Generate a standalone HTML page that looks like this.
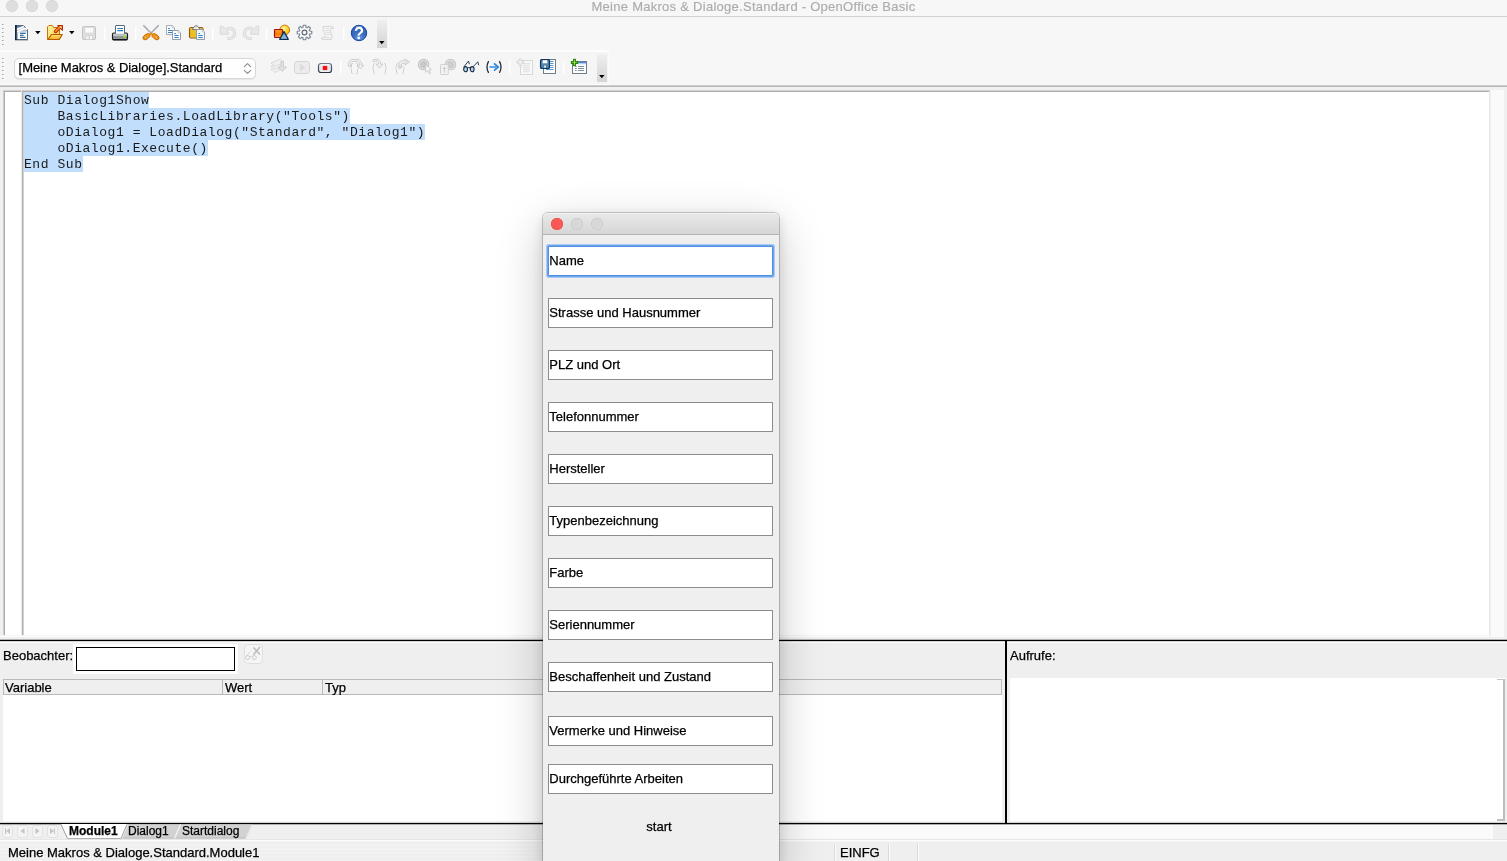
<!DOCTYPE html>
<html lang="de">
<head>
<meta charset="utf-8">
<title>Meine Makros &amp; Dialoge.Standard - OpenOffice Basic</title>
<style>
html,body{margin:0;padding:0;}
body{width:1507px;height:861px;overflow:hidden;position:relative;background:#efefef;
  font-family:"Liberation Sans",sans-serif;font-size:13px;color:#000;line-height:1;-webkit-text-stroke:0.250px #000;}
.abs{position:absolute;}
#top{left:0;top:0;width:1507px;height:85px;background:#f7f7f7;}
#titleline{left:0;top:16px;width:1507px;height:1px;background:#d2d2d2;}
.tl{width:12px;height:12px;border-radius:6px;background:#dedede;top:0;box-shadow:inset 0 0 0 0.5px #d0d0d0;}
#title{-webkit-text-stroke:0.150px #acacac;left:0;top:0px;width:1507px;text-align:center;color:#acacac;font-size:13px;letter-spacing:0.27px;white-space:nowrap;}
#tb1{left:0;top:17px;width:388px;height:33px;background:#f5f5f5;}
#tb2{left:0;top:52px;width:608px;height:32px;background:#f5f5f5;}
#tbgap{left:0;top:50px;width:609px;height:35px;background:#fcfcfc;}
.hdl{width:10px;background:linear-gradient(#efefef,#d4d4d4);}
.sep{width:1px;height:13px;background:#ffffff;box-shadow:1px 0 0 rgba(255,255,255,.45);}
.arr{width:0;height:0;border-left:2.750px solid transparent;border-right:2.750px solid transparent;border-top:3.200px solid #000;}
.ico{position:absolute;overflow:visible;}
#combo{left:14px;top:58px;width:240px;height:19px;border:1px solid #d8d8d8;border-radius:5px;background:#fefefe;box-shadow:0 1px 0 #e6e6e6;}
#combotxt{left:18.600px;top:61px;font-size:13px;letter-spacing:-0.050px;white-space:nowrap;}
/* editor */
#edline{left:0;top:85px;width:1507px;height:2px;background:linear-gradient(#d4d4d4,#b2b2b2);}
#edband{left:0;top:87px;width:1507px;height:553px;background:#f0f0f0;}
#gutter{left:3px;top:90px;width:19px;height:545px;background:#fff;border-left:1px solid #cdcdcd;border-top:1px solid #d2d2d2;box-sizing:border-box;box-shadow:inset 1px 1px 0 #adadad;}
#editor{left:22px;top:90px;width:1468px;height:545px;background:#fff;border-left:1px solid #b2b2b2;border-top:1px solid #d2d2d2;border-right:1px solid #e6e6e6;box-sizing:border-box;box-shadow:inset 0 1px 0 #adadad,inset 1px 0 0 #d0d0d0,-1px 0 0 #e8e8e8;}
#vscroll{left:1491px;top:90px;width:13px;height:547px;background:#fafafa;}
#code{-webkit-text-stroke:0;left:24px;top:92px;font-family:"Liberation Mono",monospace;font-size:13px;letter-spacing:0.556px;line-height:16px;white-space:pre;color:#1a1a1a;}
#code i{font-style:normal;position:relative;top:1px;}
#code span{background:#c1dffd;display:inline-block;height:16px;}
/* bottom */
.hline{left:0;width:1507px;height:1px;background:#000;}
#watchin-pad{left:73px;top:644px;width:165px;height:30px;background:#fff;}
#watchin{left:76px;top:647px;width:159px;height:24px;box-sizing:border-box;border:1px solid #000;background:#fff;}
#wbtn{left:244px;top:644px;width:19px;height:20px;border:1px solid #dfdfdf;border-radius:4px;background:#f5f5f5;box-sizing:border-box;}
#whead{left:3px;top:679px;width:999px;height:16px;box-sizing:border-box;border:1px solid #b9b9b9;background:#efefef;}
#wbody{left:3px;top:695px;width:999px;height:127px;background:#fff;}
.colsep{top:680px;width:1px;height:14px;background:#b9b9b9;}
#vsplit{left:1005px;top:641px;width:2px;height:182px;background:#000;}
#stack{left:1010px;top:678px;width:1493px;height:143px;background:#fff;}
/* tab bar */
.navb{top:825px;width:11px;height:13px;border:1px solid #e2e2e2;border-radius:3px;background:#f4f4f4;box-sizing:border-box;}
/* dialog */
#dlg{left:543px;top:213px;width:236px;height:660px;background:#efefef;border-radius:5px 5px 0 0;
  box-shadow:0 0 0 1px rgba(0,0,0,.20),0 14px 46px rgba(0,0,0,.22),0 4px 14px rgba(0,0,0,.13);}
#dlgbar{left:0;top:0;width:236px;height:21px;border-radius:5px 5px 0 0;background:linear-gradient(#e9e9e9,#d6d6d6);border-bottom:1px solid #b4b4b4;box-shadow:inset 0 1px 0 #f4f4f4;}
.fld{left:5px;width:225px;height:30px;box-sizing:border-box;border:1px solid #8c8c8c;background:#fff;font-size:13px;line-height:28px;padding-left:0;text-indent:0.3px;white-space:nowrap;}
</style>
</head>
<body>
<div id="wrap" class="abs" style="left:0;top:0;width:1507px;height:861px;overflow:hidden;will-change:transform">
<div id="top" class="abs"></div>
<div class="abs tl" style="left:6px"></div><div class="abs tl" style="left:26px"></div><div class="abs tl" style="left:46px"></div>
<div id="title" class="abs">Meine Makros &amp; Dialoge.Standard - OpenOffice Basic</div>
<div id="titleline" class="abs"></div>
<div id="tbgap" class="abs"></div>
<div id="tb1" class="abs"></div>
<div id="tb2" class="abs"></div>
<div id="combo" class="abs"></div>
<div id="combotxt" class="abs">[Meine Makros &amp; Dialoge].Standard</div>
<!--ICONS1START--><!-- toolbar grips -->
<svg class="ico" style="left:1px;top:23px" width="5" height="26" viewBox="0 0 5 26"><g fill="#a2a2a2"><rect x="1" y="1" width="1.500" height="1"/><rect x="1" y="5" width="1.500" height="1"/><rect x="1" y="9" width="1.500" height="1"/><rect x="1" y="13" width="1.500" height="1"/><rect x="1" y="17" width="1.500" height="1"/><rect x="1" y="21" width="1.500" height="1"/></g><g fill="#ffffff"><rect x="2" y="2" width="2" height="1"/><rect x="2" y="6" width="2" height="1"/><rect x="2" y="10" width="2" height="1"/><rect x="2" y="14" width="2" height="1"/><rect x="2" y="18" width="2" height="1"/><rect x="2" y="22" width="2" height="1"/></g></svg>
<svg class="ico" style="left:1px;top:57px" width="5" height="26" viewBox="0 0 5 26"><g fill="#a2a2a2"><rect x="1" y="1" width="1.500" height="1"/><rect x="1" y="5" width="1.500" height="1"/><rect x="1" y="9" width="1.500" height="1"/><rect x="1" y="13" width="1.500" height="1"/><rect x="1" y="17" width="1.500" height="1"/><rect x="1" y="21" width="1.500" height="1"/></g><g fill="#ffffff"><rect x="2" y="2" width="2" height="1"/><rect x="2" y="6" width="2" height="1"/><rect x="2" y="10" width="2" height="1"/><rect x="2" y="14" width="2" height="1"/><rect x="2" y="18" width="2" height="1"/><rect x="2" y="22" width="2" height="1"/></g></svg>
<!-- new document -->
<svg class="ico" style="left:13px;top:24px" width="17" height="17" viewBox="0 0 17 17">
<defs><linearGradient id="gnd" x1="0" y1="0" x2="0" y2="1"><stop offset="0" stop-color="#4f7196"/><stop offset="1" stop-color="#dfe7ef"/></linearGradient></defs>
<path d="M2.500 1.500H10.500L14.500 5.500V15.500H2.500Z" fill="#ffffff" stroke="#5d6b7c" stroke-width="1"/>
<path d="M3 2H10.300L14 5.700V8.800H3Z" fill="url(#gnd)"/>
<path d="M0.300 5.300C4 5.800 7.500 4.300 11 2.600" stroke="#ffffff" stroke-width="1.700" fill="none"/>
<path d="M0.300 8.300C5 8.300 8 6.300 9.500 5.300C11 4.400 12.800 4.400 14.200 4.900" stroke="#ffffff" stroke-width="1.700" fill="none"/>
<path d="M2 15.900H14.900" stroke="#505c6b" stroke-width="0.900"/>
<rect x="2" y="1" width="1.800" height="15" fill="#0e2443"/>
<rect x="3.800" y="8.500" width="1" height="7" fill="#6c8db0" opacity="0.750"/>
<path d="M7 9.300H12.600M7 11.400H10.600M7 13.400H12.600" stroke="#346fab" stroke-width="1.250"/>
</svg>
<svg class="ico" style="left:35px;top:31px" width="6" height="4" viewBox="0 0 6 4"><path d="M0.100 0H5.500L2.800 3.300Z" fill="#000"/></svg>
<!-- open folder -->
<svg class="ico" style="left:46px;top:24px" width="18" height="17" viewBox="0 0 18 17">
<defs><linearGradient id="gfo" x1="0" y1="0" x2="0" y2="1"><stop offset="0" stop-color="#fde27a"/><stop offset="1" stop-color="#f3b010"/></linearGradient>
<linearGradient id="gfb" x1="0" y1="0" x2="1" y2="1"><stop offset="0" stop-color="#fdf0a0"/><stop offset="1" stop-color="#f9d553"/></linearGradient></defs>
<path d="M1.500 15.300V2.800L2.800 1.500H6.300L7.500 3.500H13.500V15.300Z" fill="url(#gfb)" stroke="#c77708" stroke-width="1" stroke-linejoin="round"/>
<path d="M1.800 15.500L5.600 10.500H16.300L13.200 15.500Z" fill="url(#gfo)" stroke="#b25a02" stroke-width="1.200" stroke-linejoin="round"/>
<path d="M9.600 7.400L13.200 3.800" stroke="#b32a00" stroke-width="3.600" stroke-linecap="round"/>
<path d="M11.800 1.600H16.400V6.200Z" fill="#ff9a3c" stroke="#b32a00" stroke-width="1.200" stroke-linejoin="round"/>
<path d="M9.600 7.400L13.600 3.400" stroke="#ff8a1f" stroke-width="1.700" stroke-linecap="round"/>
<path d="M13.300 2.400H15.600V4.700Z" fill="#ffe2c0"/>
</svg>
<svg class="ico" style="left:69px;top:31px" width="6" height="4" viewBox="0 0 6 4"><path d="M0.100 0H5.500L2.800 3.300Z" fill="#000"/></svg>
<!-- save disabled -->
<svg class="ico" style="left:81px;top:25px" width="16" height="16" viewBox="0 0 16 16">
<rect x="1.500" y="1.500" width="13" height="13" rx="1.500" fill="#dedede" stroke="#c3c3c3" stroke-width="1"/>
<rect x="4" y="2.300" width="8.500" height="5.700" fill="#fbfbfb" stroke="#d2d2d2" stroke-width="0.600"/>
<rect x="5" y="10.500" width="6.500" height="4" fill="#cfcfcf"/>
<rect x="5.300" y="11" width="2.500" height="3.300" fill="#f1f1f1"/><rect x="9" y="11" width="2" height="3.300" fill="#fbfbfb"/>
</svg>
<div class="abs sep" style="left:104px;top:27px"></div>
<!-- printer -->
<svg class="ico" style="left:111px;top:24px" width="18" height="17" viewBox="0 0 18 17">
<defs><linearGradient id="gpr" x1="0" y1="0" x2="0" y2="1"><stop offset="0" stop-color="#e9ebec"/><stop offset="0.450" stop-color="#b9bdbf"/><stop offset="0.550" stop-color="#84898c"/><stop offset="1" stop-color="#a7abad"/></linearGradient></defs>
<rect x="1.500" y="9" width="15" height="6.800" rx="1.300" fill="url(#gpr)" stroke="#1e1e1e" stroke-width="1.200"/>
<path d="M2 15.600H16" stroke="#111" stroke-width="1.200"/>
<path d="M4.500 10V2Q4.500 1.500 5 1.500H13Q13.500 1.500 13.500 2V10" fill="#ffffff" stroke="#54697f" stroke-width="1"/>
<path d="M4.500 10.300H13.500" stroke="#aeb4b9" stroke-width="1"/>
<path d="M6.300 4.500H12M6.300 6.600H12" stroke="#2f7fc0" stroke-width="1.100"/>
<circle cx="13.600" cy="12.600" r="1" fill="#8df013"/><circle cx="13.600" cy="12.600" r="1.600" fill="#8df013" opacity="0.350"/>
</svg>
<div class="abs sep" style="left:135px;top:27px"></div>
<!-- scissors -->
<svg class="ico" style="left:142px;top:24px" width="18" height="17" viewBox="0 0 18 17">
<path d="M1.300 1.200L9.900 10M16.700 1.200L8.100 10" stroke="#8f9298" stroke-width="1.350"/>
<path d="M1.300 1.200L9.900 10M16.700 1.200L8.100 10" stroke="#f4f5f6" stroke-width="0.500" stroke-dasharray="0.900 0.800"/>
<g transform="rotate(-36 4.500 12.700)"><ellipse cx="4.500" cy="12.700" rx="4" ry="2.350" fill="#f79a12" stroke="#c46d00" stroke-width="0.900"/><ellipse cx="3.700" cy="12.700" rx="1.150" ry="0.800" fill="#fff6e6" stroke="#b96500" stroke-width="0.450"/></g>
<g transform="rotate(36 13.500 12.700)"><ellipse cx="13.500" cy="12.700" rx="4" ry="2.350" fill="#f79a12" stroke="#c46d00" stroke-width="0.900"/><ellipse cx="14.300" cy="12.700" rx="1.150" ry="0.800" fill="#fff6e6" stroke="#b96500" stroke-width="0.450"/></g>
<path d="M7.600 9.700L9 8.400L10.400 9.700L9 11.200Z" fill="#ea8606"/>
</svg>
<!-- copy -->
<svg class="ico" style="left:165px;top:24px" width="18" height="17" viewBox="0 0 18 17">
<path d="M1.500 1.500H7.200L9.500 3.800V10.500H1.500Z" fill="#fdfdfe" stroke="#98a3af" stroke-width="0.900"/>
<path d="M7.200 1.500V3.800H9.500" fill="#ffffff" stroke="#aab3bd" stroke-width="0.700"/>
<path d="M3 4.500H4.800M3 6.500H7.500M3 8.500H7" stroke="#3581c2" stroke-width="1"/>
<path d="M7.500 6.500H13.200L15.500 8.800V15.500H7.500Z" fill="#fdfdfe" stroke="#8793a0" stroke-width="0.900"/>
<path d="M13.200 6.500V8.800H15.500" fill="#ffffff" stroke="#aab3bd" stroke-width="0.700"/>
<path d="M9.300 9.500H11M9.300 11.500H13.700M9.300 13.500H13.700" stroke="#3581c2" stroke-width="1"/>
</svg>
<!-- paste -->
<svg class="ico" style="left:188px;top:24px" width="18" height="17" viewBox="0 0 18 17">
<defs><linearGradient id="gcb" x1="0" y1="0" x2="0" y2="1"><stop offset="0" stop-color="#e8c63a"/><stop offset="0.800" stop-color="#e9bd1c"/><stop offset="1" stop-color="#f6dd7a"/></linearGradient></defs>
<rect x="1.500" y="3.500" width="13.500" height="10.500" rx="1.500" fill="url(#gcb)" stroke="#9a5b05" stroke-width="1.200"/>
<path d="M4.300 5.500L6.600 2.300Q8.200 0.600 9.800 2.300L12.100 5.500Z" fill="#fdfdfd" stroke="#5b5e62" stroke-width="0.800" stroke-linejoin="round"/>
<path d="M7.100 3H9.300" stroke="#8f959b" stroke-width="0.800"/>
<path d="M8.500 5.500H14.200L16.500 7.800V15.500H8.500Z" fill="#f4f7fa" stroke="#8793a0" stroke-width="0.900"/>
<path d="M14.200 5.500V7.800H16.500" fill="#ffffff" stroke="#aab3bd" stroke-width="0.700"/>
<path d="M10.500 9.500H12M10.300 11.500H14.700M10.300 13.500H14.700" stroke="#3581c2" stroke-width="1"/>
</svg>
<div class="abs sep" style="left:212px;top:27px"></div>
<!-- undo disabled -->
<svg class="ico" style="left:219px;top:25px" width="18" height="16" viewBox="0 0 18 16">
<path d="M6.800 4.800A5.100 5.100 0 1 1 9.500 13.400" fill="none" stroke="#d8d8d8" stroke-width="3.200" stroke-linecap="round"/>
<path d="M1.300 1.300H3.600L9.300 6.700V9.200H1.300Z" fill="#e8e8e8" stroke="#d8d8d8" stroke-width="1" stroke-linejoin="round"/>
<path d="M6.800 4.800A5.100 5.100 0 1 1 9.500 13.400" fill="none" stroke="#e9e9e9" stroke-width="1.700" stroke-linecap="round"/>
</svg>
<!-- redo disabled -->
<svg class="ico" style="left:242px;top:25px" width="18" height="16" viewBox="0 0 18 16"><g transform="translate(18 0) scale(-1 1)">
<path d="M6.800 4.800A5.100 5.100 0 1 1 9.500 13.400" fill="none" stroke="#d8d8d8" stroke-width="3.200" stroke-linecap="round"/>
<path d="M1.300 1.300H3.600L9.300 6.700V9.200H1.300Z" fill="#e8e8e8" stroke="#d8d8d8" stroke-width="1" stroke-linejoin="round"/>
<path d="M6.800 4.800A5.100 5.100 0 1 1 9.500 13.400" fill="none" stroke="#e9e9e9" stroke-width="1.700" stroke-linecap="round"/></g>
</svg>
<div class="abs sep" style="left:266px;top:27px"></div>
<!-- shapes -->
<svg class="ico" style="left:273px;top:24px" width="18" height="17" viewBox="0 0 18 17">
<defs><radialGradient id="gci" cx="0.400" cy="0.350" r="0.700"><stop offset="0" stop-color="#fff3a8"/><stop offset="0.600" stop-color="#fbd328"/><stop offset="1" stop-color="#f5b800"/></radialGradient>
<linearGradient id="gsq" x1="0" y1="0" x2="0" y2="1"><stop offset="0" stop-color="#ff9d2a"/><stop offset="0.600" stop-color="#f77d00"/><stop offset="1" stop-color="#ffae45"/></linearGradient>
<linearGradient id="gtr" x1="0" y1="0" x2="0" y2="1"><stop offset="0" stop-color="#4f86b4"/><stop offset="1" stop-color="#a8cbe4"/></linearGradient></defs>
<circle cx="11.700" cy="6" r="4.900" fill="url(#gci)" stroke="#c9780a" stroke-width="1"/>
<rect x="1.500" y="5.500" width="8" height="8" rx="0.800" fill="url(#gsq)" stroke="#a60d0d" stroke-width="1.200"/>
<path d="M11 7.500L15.300 15.300H6.700Z" fill="url(#gtr)" stroke="#0c2d5a" stroke-width="1.300" stroke-linejoin="round"/>
</svg>
<!-- gear -->
<svg class="ico" style="left:296px;top:24px" width="17" height="17" viewBox="0 0 17 17">
<g transform="translate(8.500 8.500)">
<path id="gearp" d="M-1.55 -5.07L-1.28 -7.29L1.28 -7.29L1.55 -5.07L2.49 -4.68L4.24 -6.06L6.06 -4.24L4.68 -2.49L5.07 -1.55L7.29 -1.28L7.29 1.28L5.07 1.55L4.68 2.49L6.06 4.24L4.24 6.06L2.49 4.68L1.55 5.07L1.28 7.29L-1.28 7.29L-1.55 5.07L-2.49 4.68L-4.24 6.06L-6.06 4.24L-4.68 2.49L-5.07 1.55L-7.29 1.28L-7.29 -1.28L-5.07 -1.55L-4.68 -2.49L-6.06 -4.24L-4.24 -6.06L-2.49 -4.68Z" fill="#fbfcfd" stroke="#76828f" stroke-width="1.100" stroke-linejoin="round"/>
<circle cx="0" cy="0" r="2.400" fill="#f6f6f6" stroke="#5f6b78" stroke-width="1.200"/>
</g>
</svg>
<!-- scroll disabled -->
<svg class="ico" style="left:320px;top:25px" width="17" height="16" viewBox="0 0 17 16">
<path d="M3 1.500H11.500Q13.500 1.500 13.500 3.500H11Q9.500 5.500 11 8Q13 11 11.500 14.500H3Q1 14.500 1.500 12.500H4.500Q6 10.500 4.500 8Q2.500 5 3 1.500Z" fill="#f3f3f3" stroke="#d6d6d6" stroke-width="1" stroke-linejoin="round"/>
<path d="M5 3.500H9M5 5.500H9M6 7.500H10M7 9.500H11M2 12.500H10" stroke="#dcdcdc" stroke-width="0.800"/>
</svg>
<div class="abs sep" style="left:343px;top:27px"></div>
<!-- help -->
<svg class="ico" style="left:350px;top:24px" width="18" height="18" viewBox="0 0 18 18">
<defs><radialGradient id="ghp" cx="0.500" cy="0.850" r="0.800"><stop offset="0" stop-color="#6b9be6"/><stop offset="0.450" stop-color="#3e6fc4"/><stop offset="1" stop-color="#2f5fb6"/></radialGradient></defs>
<circle cx="9" cy="9" r="7.700" fill="url(#ghp)" stroke="#1746a0" stroke-width="1"/>
<ellipse cx="9" cy="3.200" rx="3.200" ry="0.900" fill="#dfe9fa" opacity="0.750"/>
<text x="9" y="14.600" text-anchor="middle" font-family="Liberation Sans, sans-serif" font-weight="bold" font-size="16.500" fill="#ffffff">?</text>
</svg>
<div class="abs hdl" style="left:377px;top:20px;height:28px"></div>
<svg class="ico" style="left:379px;top:41px" width="6" height="4" viewBox="0 0 6 4"><path d="M0.100 0H5.500L2.800 3.300Z" fill="#000"/></svg>
<div class="abs" style="left:388px;top:17px;width:1px;height:33px;background:#fbfbfb"></div>
<!--ICONS1END-->
<!--ICONS2START--><!-- combo chevrons -->
<svg class="ico" style="left:243px;top:62px" width="9" height="13" viewBox="0 0 9 13"><path d="M1.300 4.700L4.500 1.600L7.700 4.700M1.300 8.300L4.500 11.400L7.700 8.300" fill="none" stroke="#8c8c8c" stroke-width="1.150" stroke-linecap="round" stroke-linejoin="round"/></svg>
<!-- compile disabled -->
<svg class="ico" style="left:270px;top:58px" width="18" height="17" viewBox="0 0 18 17">
<g fill="#f0f0f0" stroke="#cdcdcd" stroke-width="0.900" stroke-dasharray="1.400 0.600"><path d="M1 11L5 14.500L13 10.500L9 7.500Z"/><path d="M1 8L5 11.500L13 7.500L9 4.500Z"/><path d="M1 5L5 8.500L14 4.500L10.500 1Z"/></g>
<path d="M11 3.500H13.500V9H16.500L12.250 13.500L8 9H11Z" fill="#e2e2e2" stroke="#c9c9c9" stroke-width="0.900"/>
</svg>
<!-- run disabled -->
<svg class="ico" style="left:293px;top:60px" width="18" height="15" viewBox="0 0 18 15">
<rect x="1.500" y="1.500" width="15" height="12" rx="3" fill="#ececec" stroke="#d3d3d3" stroke-width="1"/>
<path d="M7.300 4.200V10.800L11.800 7.500Z" fill="#dcdcdc" stroke="#d2d2d2" stroke-width="0.500"/>
</svg>
<!-- stop -->
<svg class="ico" style="left:317px;top:62px" width="16" height="12" viewBox="0 0 16 12">
<defs><linearGradient id="gst" x1="0" y1="0" x2="0" y2="1"><stop offset="0" stop-color="#f4f6f8"/><stop offset="0.500" stop-color="#dfe4e9"/><stop offset="1" stop-color="#f2f5f7"/></linearGradient><linearGradient id="gss" x1="0" y1="0" x2="0" y2="1"><stop offset="0" stop-color="#6f7988"/><stop offset="1" stop-color="#283140"/></linearGradient></defs>
<rect x="1.500" y="1.500" width="13" height="9" rx="2.500" fill="url(#gst)" stroke="url(#gss)" stroke-width="1.200"/>
<rect x="5.800" y="3.900" width="4.400" height="4.200" fill="#fb0d0d"/>
</svg>
<div class="abs sep" style="left:340px;top:61px"></div>
<!-- step over disabled -->
<svg class="ico" style="left:347px;top:58px" width="18" height="17" viewBox="0 0 18 17">
<g fill="none" stroke="#c9c9c9" stroke-width="0.900" stroke-linejoin="round">
<path d="M5.800 5.400Q4.500 5.400 4.500 6.600V9.200L3.300 10.300L4.500 11.400V14.300Q4.500 15.600 5.800 15.600M9.200 5.400Q10.500 5.400 10.500 6.600V9.200L11.700 10.300L10.500 11.400V14.300Q10.500 15.600 9.200 15.600"/>
<path d="M1.400 8.300V4.700L4.200 1.400H11.800L14.600 4.700V7.300H16.800L13.500 10.700L10.200 7.300H12.400V5.200L10.900 3.400H5.100L3.600 5.200V8.300Z" fill="#f1f1f1"/></g>
</svg>
<!-- step into disabled -->
<svg class="ico" style="left:371px;top:58px" width="17" height="17" viewBox="0 0 17 17">
<g fill="none" stroke="#c9c9c9" stroke-width="0.900" stroke-linejoin="round">
<path d="M3.800 5.400Q2.500 5.400 2.500 6.600V9.200L1.300 10.300L2.500 11.400V14.300Q2.500 15.600 3.800 15.600M13.200 5.400Q14.500 5.400 14.500 6.600V9.200L15.700 10.300L14.500 11.400V14.300Q14.500 15.600 13.200 15.600"/>
<path d="M1.200 2.700L2.800 1.300H7.200L9.600 3.700V6.200H12L8.500 10.200L5 6.200H7.400V4.500L6.300 3.400H2.800Z" fill="#f1f1f1"/></g>
</svg>
<!-- step out disabled -->
<svg class="ico" style="left:394px;top:58px" width="17" height="17" viewBox="0 0 17 17">
<g fill="none" stroke="#c9c9c9" stroke-width="0.900" stroke-linejoin="round">
<path d="M3.800 5.400Q2.500 5.400 2.500 6.600V9.200L1.300 10.300L2.500 11.400V14.300Q2.500 15.600 3.800 15.600M8.200 8.400Q9.500 8.400 9.500 9.300L10.700 10.300L9.500 11.400V14.300Q9.500 15.600 8.200 15.600"/>
<path d="M4.600 10.200V6.500Q4.800 3 8.500 2.600H11V0.900L15.600 4L11 7.100V5.300H9Q7.300 5.600 7.300 7.300V10.200Z" fill="#efefef"/>
<path d="M6 9.700V6.800"/></g>
<path d="M11.500 2.200L14.300 4L11.500 5.900Z" fill="#dcdcdc"/>
</svg>
<!-- breakpoint disabled -->
<svg class="ico" style="left:417px;top:58px" width="17" height="18" viewBox="0 0 17 18">
<circle cx="6.600" cy="6.600" r="5.200" fill="#e2e2e2" stroke="#c3c3c3" stroke-width="1.100"/>
<circle cx="6.600" cy="6.600" r="3.100" fill="#c9c9c9" stroke="#bdbdbd" stroke-width="0.800"/>
<path d="M8.800 6.600L14.300 11.600L11.800 11.900L13.600 15.100L12.300 15.800L10.600 12.600L8.800 14.300Z" fill="#fdfdfd" stroke="#c6c6c6" stroke-width="0.900" stroke-linejoin="round"/>
</svg>
<!-- manage breakpoints disabled -->
<svg class="ico" style="left:439px;top:58px" width="18" height="18" viewBox="0 0 18 18">
<circle cx="11.500" cy="6.600" r="5.200" fill="#e4e4e4" stroke="#c8c8c8" stroke-width="1.100"/>
<circle cx="11.500" cy="6.600" r="3.100" fill="#cfcfcf" stroke="#c2c2c2" stroke-width="0.800"/>
<rect x="1.500" y="6.500" width="7.700" height="10" rx="0.800" fill="#f3f3f3" stroke="#d0d0d0" stroke-width="1"/>
<path d="M5.300 8.500V14.500M3.500 10.300H7.200" stroke="#cacaca" stroke-width="1"/>
</svg>
<!-- glasses -->
<svg class="ico" style="left:462px;top:59px" width="18" height="15" viewBox="0 0 18 15">
<path d="M2.200 7.400L6.500 2L7.300 4.800M11.500 7.300L15.800 2.800L16.600 5.800" fill="none" stroke="#1d2c40" stroke-width="0.900" stroke-linecap="round" stroke-linejoin="round"/>
<ellipse cx="3.600" cy="10.200" rx="1.900" ry="2.600" fill="#b4d6f7" stroke="#17263a" stroke-width="1.050"/>
<ellipse cx="10.200" cy="10.200" rx="1.900" ry="2.600" fill="#b4d6f7" stroke="#17263a" stroke-width="1.050"/>
<path d="M5.500 9Q6.900 8 8.300 9" fill="none" stroke="#17263a" stroke-width="1"/>
</svg>
<!-- step (->) -->
<svg class="ico" style="left:485px;top:60px" width="18" height="14" viewBox="0 0 18 14">
<path d="M3.400 1.600Q0.600 7 3.400 12.400M14.600 1.600Q17.400 7 14.600 12.400" fill="none" stroke="#1d2c40" stroke-width="1.300" stroke-linecap="round"/>
<path d="M4.500 7H11.500" stroke="#3a92de" stroke-width="1.600"/>
<path d="M9 3.400L13.200 7L9 10.600" fill="none" stroke="#2c86d6" stroke-width="1.700" stroke-linejoin="miter"/>
</svg>
<div class="abs sep" style="left:509px;top:61px"></div>
<!-- insert source disabled -->
<svg class="ico" style="left:516px;top:58px" width="18" height="18" viewBox="0 0 18 18">
<rect x="4.500" y="2.500" width="12" height="14" fill="#f8f8f8" stroke="#d9d9d9" stroke-width="1"/>
<path d="M7 5.700H14M7 7.700H14M7 9.700H14M7 11.700H14M7 13.700H14" stroke="#dcdcdc" stroke-width="0.900"/>
<path d="M3.200 1H5.300V3.200H7.500V5.300H5.300V7.700H3.200V5.300H1V3.200H3.200Z" fill="#f4f4f4" stroke="#d2d2d2" stroke-width="0.900"/>
</svg>
<!-- save source -->
<svg class="ico" style="left:539px;top:58px" width="18" height="17" viewBox="0 0 18 17">
<rect x="4.500" y="1.500" width="12" height="14" fill="#fdfdfe" stroke="#6f7d8c" stroke-width="1"/>
<path d="M11 3.500H14.500M11 5.500H14.500M11 7.500H14.500M11 9.500H14.500M7 11.500H14.500" stroke="#4a8cc9" stroke-width="0.900"/>
<rect x="1.600" y="1.600" width="8.800" height="8.800" rx="1" fill="#5f8fb7" stroke="#0f3359" stroke-width="1.300"/>
<rect x="3.700" y="2.200" width="4.600" height="3" fill="#ffffff"/>
<rect x="3.300" y="6.500" width="5.400" height="3.400" fill="#4c7ea8"/>
<rect x="5.200" y="7.600" width="1.700" height="2" fill="#ffffff"/>
</svg>
<div class="abs sep" style="left:563px;top:61px"></div>
<!-- new dialog -->
<svg class="ico" style="left:570px;top:58px" width="18" height="17" viewBox="0 0 18 17">
<rect x="2.500" y="3.500" width="14" height="12" fill="#fbfcfe" stroke="#6f7d8c" stroke-width="1"/>
<rect x="3" y="4" width="13" height="1.400" fill="#4b8ae2"/>
<rect x="3" y="5.400" width="13" height="0.800" fill="#b4d0f5"/>
<path d="M5 8.500H6.700M5 10.500H6.700M5 12.500H6.700M8 8.500H14M8 10.500H14M8 12.500H14" stroke="#76838f" stroke-width="0.900"/>
<path d="M3.600 1.400H5.400V3.600H7.600V5.400H5.400V7.600H3.600V5.400H1.400V3.600H3.600Z" fill="#c3e556" stroke="#1f8a09" stroke-width="1.100" stroke-linejoin="round"/>
</svg>
<div class="abs hdl" style="left:597px;top:54px;height:28px"></div>
<svg class="ico" style="left:599px;top:75px" width="6" height="4" viewBox="0 0 6 4"><path d="M0.100 0H5.500L2.800 3.300Z" fill="#000"/></svg>
<div class="abs" style="left:608px;top:52px;width:1px;height:32px;background:#fbfbfb"></div>
<!--ICONS2END-->

<div id="edband" class="abs"></div>
<div id="edline" class="abs"></div>
<div id="gutter" class="abs"></div>
<div id="editor" class="abs"></div>
<div id="vscroll" class="abs"></div>
<div id="code" class="abs"><span><i>Sub Dialog1Show</i></span>
<span><i>    BasicLibraries.LoadLibrary("Tools")</i></span>
<span><i>    oDialog1 = LoadDialog("Standard", "Dialog1")</i></span>
<span><i>    oDialog1.Execute()</i></span>
<span><i>End Sub</i></span></div>


<div class="abs" style="left:0;top:635px;width:1490px;height:1px;background:#f4f4f4"></div>
<div class="abs" style="left:0;top:636px;width:1490px;height:1px;background:#fdfdfd"></div>
<div class="abs" style="left:0;top:639px;width:1507px;height:1px;background:#b4b4b4"></div>
<div class="abs hline" style="top:640px"></div>
<div class="abs" style="left:0;top:641px;width:1507px;height:1px;background:#d6d6d6"></div>
<div class="abs" style="left:0;top:642px;width:1507px;height:1px;background:#fbfbfb"></div>
<div class="abs" style="left:3px;top:649px;font-size:13px;white-space:nowrap" id="lblBeob">Beobachter:</div>
<div id="watchin-pad" class="abs"></div><div id="watchin" class="abs"></div>
<div id="wbtn" class="abs"></div>
<svg class="ico" style="left:244px;top:644px" width="19" height="20" viewBox="0 0 19 20"><g fill="none" stroke="#c6c6c6" stroke-width="0.900"><circle cx="3.700" cy="13.500" r="2"/><circle cx="10.300" cy="13.500" r="2"/><path d="M5.700 13Q7 12 8.300 13M2.500 11.800L7 6.500M9 11.500L11 9" stroke-dasharray="1.300 0.700"/></g><path d="M9.500 3.500L16 10.500M16 3L9.500 10.500" stroke="#bdbdbd" stroke-width="1.700"/></svg>
<div id="whead" class="abs"></div>
<div class="abs colsep" style="left:222px"></div><div class="abs colsep" style="left:322px"></div>
<div class="abs" style="left:5px;top:681px;white-space:nowrap" id="hVar">Variable</div>
<div class="abs" style="left:225px;top:681px;white-space:nowrap" id="hWert">Wert</div>
<div class="abs" style="left:325px;top:681px;white-space:nowrap" id="hTyp">Typ</div>
<div id="wbody" class="abs"></div>
<div class="abs" style="left:1010px;top:649px;white-space:nowrap" id="lblAuf">Aufrufe:</div>
<div id="stack" class="abs" style="width:495px"></div>
<div class="abs" style="left:1503px;top:679px;width:2px;height:142px;background:#bdbdbd"></div>
<div class="abs" style="left:1497px;top:679px;width:8px;height:1px;background:#c4c4c4"></div>
<div class="abs" style="left:1497px;top:819px;width:8px;height:2px;background:#bdbdbd"></div>
<!-- tab bar -->
<div class="abs" style="left:0;top:821px;width:1507px;height:1px;background:#f2f2f2"></div><div class="abs" style="left:0;top:822px;width:1507px;height:1px;background:#d4d4d4"></div>
<div class="abs hline" style="top:823px"></div>
<div class="abs" style="left:0;top:824px;width:1507px;height:1px;background:#adadad"></div>
<div class="abs" style="left:0;top:825px;width:1507px;height:15px;background:#efefef"></div>
<div class="abs" style="left:543px;top:825px;width:950px;height:14px;background:#fafafa"></div>
<div class="abs navb" style="left:2px"></div><div class="abs navb" style="left:17px"></div><div class="abs navb" style="left:32px"></div><div class="abs navb" style="left:47px"></div>
<svg class="abs" style="left:0;top:824px" width="260" height="16" viewBox="0 0 260 16">
 <g fill="#c4c4c4"><path d="M5 4h1v6h-1zM10 4v6l-4-3z"/><path d="M24.5 4v6l-4-3z"/><path d="M35.500 4v6l4-3z"/><path d="M50 4v6l4-3zM54 4h1v6h-1z"/></g>
 <path d="M127 0.500L121 14.500H174L180 0.500Z" fill="#d2d2d2"/>
 <path d="M180 0.500L174 14.500H245.500L251.500 0.500Z" fill="#d2d2d2"/>
 <path d="M122 14H245.500" stroke="#bcbcbc" stroke-width="1" fill="none"/>
 <path d="M127.700 0.500L121.700 14.500M180.500 0.500L174.500 14.500" stroke="#f2f2f2" stroke-width="1.300" fill="none"/><path d="M252 0.500L246 14.500" stroke="#e4e4e4" stroke-width="1" fill="none"/>
 <path d="M61 0L67.500 14.500H121L127 0Z" fill="#ffffff"/>
 <path d="M61 0.500L67.500 14.500M121 14.500L127 0.500" stroke="#9c9c9c" stroke-width="1" fill="none"/>
 <path d="M67.500 14.500H121" stroke="#b0b0b0" stroke-width="1.200" fill="none"/>
</svg>
<div class="abs" style="left:69px;top:825px;font-weight:bold;font-size:12px;white-space:nowrap" id="tab1">Module1</div>
<div class="abs" style="left:128px;top:825px;font-size:12px;white-space:nowrap" id="tab2">Dialog1</div>
<div class="abs" style="left:182px;top:825px;font-size:12px;white-space:nowrap" id="tab3">Startdialog</div>
<div id="vsplit" class="abs"></div>
<!-- status bar -->
<div class="abs" style="left:0;top:839px;width:1507px;height:1px;background:#e6e6e6"></div>
<div class="abs" style="left:0;top:840px;width:1507px;height:1px;background:#fcfcfc"></div><div class="abs" style="left:0;top:841px;width:1507px;height:1px;background:#f4f4f4"></div>
<div class="abs" style="left:0;top:842px;width:1507px;height:19px;background:#efefef"></div><div class="abs" style="left:0;top:842px;width:543px;height:19px;background:repeating-linear-gradient(#efefef 0,#efefef 2px,#f2f2f2 2px,#f2f2f2 4px)"></div>
<div class="abs" style="left:8px;top:846px;white-space:nowrap" id="stat1">Meine Makros &amp; Dialoge.Standard.Module1</div>
<div class="abs" style="left:840px;top:846px;white-space:nowrap" id="stat2">EINFG</div>
<div class="abs" style="left:834px;top:844px;width:1px;height:17px;background:#dadada;box-shadow:1px 0 0 #fbfbfb"></div>
<div class="abs" style="left:888px;top:844px;width:1px;height:17px;background:#dadada;box-shadow:1px 0 0 #fbfbfb"></div>
<div class="abs" style="left:917px;top:844px;width:1px;height:17px;background:#dadada;box-shadow:1px 0 0 #fbfbfb"></div>
<!--BOTTOM-->
<div id="dlg" class="abs"><div id="dlgbar" class="abs"></div>
<div class="abs" style="left:8px;top:5px;width:12px;height:12px;border-radius:6px;background:#fc5753;box-shadow:inset 0 0 0 0.5px #df4744"></div><div class="abs" style="left:28px;top:5px;width:12px;height:12px;border-radius:6px;background:#d8d8d8;box-shadow:inset 0 0 0 0.5px #c4c4c4"></div><div class="abs" style="left:48px;top:5px;width:12px;height:12px;border-radius:6px;background:#d8d8d8;box-shadow:inset 0 0 0 0.5px #c4c4c4"></div>
<div class="abs fld" id="f0" style="top:33px;border:1px solid #4f8fe6;border-radius:1px;box-shadow:0 0 0 1px #6ea6ee,0 0 0 2px rgba(140,186,246,.70)">Name</div>
<div class="abs fld" id="f1" style="top:85px">Strasse und Hausnummer</div>
<div class="abs fld" id="f2" style="top:137px">PLZ und Ort</div>
<div class="abs fld" id="f3" style="top:189px">Telefonnummer</div>
<div class="abs fld" id="f4" style="top:241px">Hersteller</div>
<div class="abs fld" id="f5" style="top:293px">Typenbezeichnung</div>
<div class="abs fld" id="f6" style="top:345px">Farbe</div>
<div class="abs fld" id="f7" style="top:397px">Seriennummer</div>
<div class="abs fld" id="f8" style="top:449px">Beschaffenheit und Zustand</div>
<div class="abs fld" id="f9" style="top:503px">Vermerke und Hinweise</div>
<div class="abs fld" id="f10" style="top:551px">Durchgeführte Arbeiten</div>
<div class="abs" style="left:0;top:607px;width:232px;text-align:center" id="startbtn">start</div>
</div>
</div>
</body>
</html>
